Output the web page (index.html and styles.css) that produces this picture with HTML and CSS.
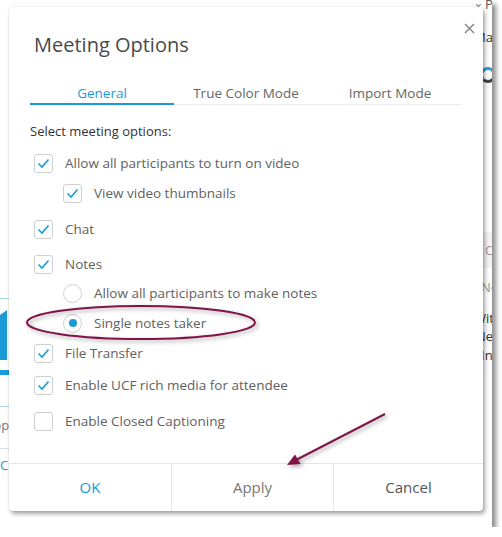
FILE: index.html
```html
<!DOCTYPE html>
<html>
	<head>
		<link rel="stylesheet" href="styles.css">
	</head>
	<body>
		<div class="frame">
			<div class="backdrop">
				<span class="bg-text chev">&#8964;</span>
				<span class="bg-text pa">Participants</span>
				<span class="bg-text ak">Make</span>
				<span class="bg-icon"></span>
				<span class="bg-band"></span>
				<span class="bg-text ch">Chat</span>
				<span class="bg-text no">Notes</span>
				<span class="bg-text hi">Within</span>
				<span class="bg-text ed">Need</span>
				<span class="bg-text to">Into</span>

				<span class="bg-line line1"></span>
				<span class="bg-one"></span>
				<span class="bg-bar"></span>
				<span class="bg-line line2"></span>
				<span class="bg-text dotp">App</span>
				<span class="bg-rule"></span>
				<span class="bg-text cc">C</span>
			</div>

			<div class="dialog">
				<span class="close">
					<svg width="11" height="11" viewBox="0 0 11 11"><path d="M1 1L10 10M10 1L1 10" stroke="#7a7a7a" stroke-width="1.2" fill="none"/></svg>
				</span>
				<h1 class="title">Meeting Options</h1>
				<div class="tabs">
					<div class="tab active">General</div>
					<div class="tab">True Color Mode</div>
					<div class="tab">Import Mode</div>
				</div>
				<div class="content">
					<p class="lead">Select meeting options:</p>

					<div class="opt">
						<span class="box"><svg width="17" height="17" viewBox="0 0 17 17"><path d="M3.5 8.5L7 12L13.5 4.5" /></svg></span>
						<span class="label">Allow all participants to turn on video</span>
					</div>
					<div class="opt sub gap10">
						<span class="box"><svg width="17" height="17" viewBox="0 0 17 17"><path d="M3.5 8.5L7 12L13.5 4.5" /></svg></span>
						<span class="label">View video thumbnails</span>
					</div>
					<div class="opt gap16">
						<span class="box"><svg width="17" height="17" viewBox="0 0 17 17"><path d="M3.5 8.5L7 12L13.5 4.5" /></svg></span>
						<span class="label">Chat</span>
					</div>
					<div class="opt gap15">
						<span class="box"><svg width="17" height="17" viewBox="0 0 17 17"><path d="M3.5 8.5L7 12L13.5 4.5" /></svg></span>
						<span class="label">Notes</span>
					</div>
					<div class="opt sub gap9">
						<span class="radio"></span>
						<span class="label">Allow all participants to make notes</span>
					</div>
					<div class="opt sub gap10">
						<span class="radio on"></span>
						<span class="label">Single notes taker</span>
					</div>
					<div class="opt gap10">
						<span class="box"><svg width="17" height="17" viewBox="0 0 17 17"><path d="M3.5 8.5L7 12L13.5 4.5" /></svg></span>
						<span class="label">File Transfer</span>
					</div>
					<div class="opt gap12">
						<span class="box"><svg width="17" height="17" viewBox="0 0 17 17"><path d="M3.5 8.5L7 12L13.5 4.5" /></svg></span>
						<span class="label">Enable UCF rich media for attendee</span>
					</div>
					<div class="opt gap16">
						<span class="box"></span>
						<span class="label">Enable Closed Captioning</span>
					</div>
				</div>
				<div class="footer">
					<div class="btn ok">OK</div>
					<div class="btn apply">Apply</div>
					<div class="btn cancel">Cancel</div>
				</div>
			</div>
		</div>

		<svg class="marks" width="502" height="537" viewBox="0 0 502 537">
			<ellipse cx="141" cy="322.5" rx="114" ry="16.5" fill="none" stroke="#7f1449" stroke-width="2"/>
			<line x1="385" y1="414" x2="296" y2="460" stroke="#7f1449" stroke-width="2"/>
			<polygon points="287,465 300.5,464 295,454.5" fill="#7f1449"/>
		</svg>
	</body>
</html>
```

FILE: styles.css
```css
body {
	margin: 0;
	background-color: white;
	font-family: "Open Sans", "Noto Sans", sans-serif;
	position: relative;
}
.frame {
	position: relative;
	width: 492px;
	height: 527px;
	background-color: white;
	overflow: hidden;
	box-shadow: 4px 4px 5px rgba(0, 0, 0, 0.45);
}

/* app behind the dialog */
.bg-text {
	position: absolute;
	font-size: 13px;
	line-height: 16px;
	color: #333;
	white-space: nowrap;
}
.chev { left: 473px; top: -6px; color: #888; }
.pa { left: 485px; top: -4px; color: #555; }
.ak { left: 474px; top: 29px; }
.bg-icon {
	position: absolute;
	left: 480px;
	top: 67px;
	width: 10px;
	height: 10px;
	border: 3px solid #2a9fd2;
	border-right-color: #444;
	border-bottom-color: #444;
	border-radius: 50%;
}
.bg-band {
	position: absolute;
	left: 470px;
	top: 232px;
	width: 30px;
	height: 36px;
	background-color: #f3f3f3;
}
.ch { left: 485px; top: 242px; color: #999; }
.no { left: 481px; top: 279px; color: #999; }
.hi { left: 474px; top: 310px; }
.ed { left: 476px; top: 328px; }
.to { left: 481px; top: 347px; }

.bg-line {
	position: absolute;
	left: 0;
	width: 9px;
	height: 1px;
	background-color: #a6d6ec;
}
.line1 { top: 298px; }
.line2 { top: 406px; }
.bg-one {
	position: absolute;
	left: 0;
	top: 310px;
	width: 7px;
	height: 50px;
	background-color: #1a9ad6;
	clip-path: polygon(0 10%, 100% 0, 100% 100%, 0 100%);
}
.bg-bar {
	position: absolute;
	left: 0;
	top: 370px;
	width: 9px;
	height: 5px;
	background-color: #1a9ad6;
}
.dotp { left: -15px; top: 417px; color: #777; }
.bg-rule {
	position: absolute;
	left: 0;
	top: 448px;
	width: 9px;
	height: 1px;
	background-color: #ddd;
}
.cc { left: 0; top: 457px; color: #1a9ad6; }

/* dialog */
.dialog {
	position: absolute;
	left: 9px;
	top: 7px;
	width: 474px;
	height: 504px;
	background-color: white;
	border-radius: 4px;
	box-shadow: 2px 3px 4px rgba(0, 0, 0, 0.35), 0 0 2px rgba(0, 0, 0, 0.15);
	display: flex;
	flex-direction: column;
}
.close {
	position: absolute;
	right: 8px;
	top: 10px;
}
.title {
	margin: 0;
	padding: 25px 0 0 25px;
	font-size: 20px;
	font-weight: normal;
	line-height: 26px;
	color: #4a4a4a;
}
.tabs {
	display: flex;
	margin: 25px 21px 0 21px;
	border-bottom: 1px solid #ececec;
}
.tab {
	flex: 1;
	text-align: center;
	font-size: 13.5px;
	line-height: 20px;
	color: #666;
	border-bottom: 2px solid transparent;
	margin-bottom: -1px;
}
.tab.active {
	color: #1a9ad6;
	border-bottom-color: #1a9ad6;
}
.content {
	padding-left: 21px;
}
.lead {
	margin: 17px 0 13px 0;
	font-size: 13px;
	line-height: 18px;
	color: #333;
}
.opt {
	display: flex;
	align-items: center;
	height: 20px;
	margin-left: 4px;
}
.opt.sub {
	margin-left: 33px;
}
.gap9 { margin-top: 9px; }
.gap10 { margin-top: 10px; }
.gap12 { margin-top: 12px; }
.gap15 { margin-top: 15px; }
.gap16 { margin-top: 16px; }
.box {
	box-sizing: border-box;
	width: 19px;
	height: 19px;
	border: 1px solid #cfcfcf;
	border-radius: 3px;
	margin-right: 12px;
	flex: none;
}
.box svg {
	display: block;
}
.box path {
	fill: none;
	stroke: #1a9ad6;
	stroke-width: 1.6;
}
.radio {
	box-sizing: border-box;
	width: 19px;
	height: 19px;
	border: 1px solid #cfcfcf;
	border-radius: 50%;
	margin-right: 12px;
	flex: none;
	display: flex;
	align-items: center;
	justify-content: center;
}
.radio.on::after {
	content: "";
	width: 8px;
	height: 8px;
	border-radius: 50%;
	background-color: #1a9ad6;
}
.label {
	font-size: 13.5px;
	color: #616161;
	white-space: nowrap;
}
.footer {
	margin-top: auto;
	height: 47px;
	border-top: 1px solid #e6e6e6;
	display: grid;
	grid-template-columns: 162px 162px 1fr;
}
.btn {
	display: flex;
	align-items: center;
	justify-content: center;
	font-size: 15px;
	color: #555;
	padding-bottom: 1px;
}
.btn + .btn {
	border-left: 1px solid #e6e6e6;
}
.ok {
	color: #1a9ad6;
}
.apply {
	color: #777;
}

.marks {
	position: absolute;
	left: 0;
	top: 0;
	pointer-events: none;
	filter: drop-shadow(2px 2px 2px rgba(0, 0, 0, 0.35));
}
```
